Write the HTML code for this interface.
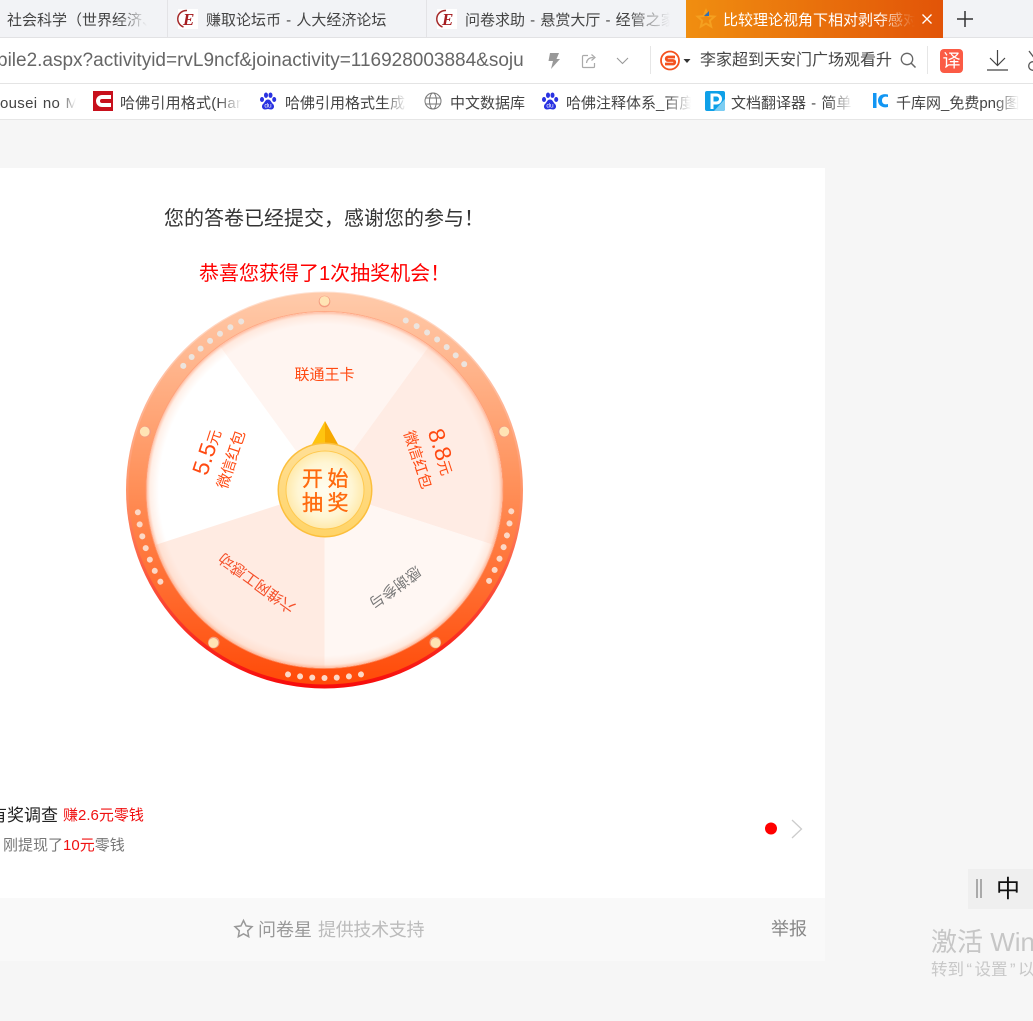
<!DOCTYPE html>
<html lang="zh"><head><meta charset="utf-8"><title>问卷星</title>
<style>
html,body{margin:0;padding:0;background:#f6f6f6}
body{position:relative;width:1033px;height:1021px;overflow:hidden;font-family:"Liberation Sans","Noto Sans CJK SC",sans-serif}
.a{position:absolute;white-space:nowrap;overflow:hidden}
.t{font-size:15px;line-height:20px;color:#444;word-spacing:1px}
.f{-webkit-mask-image:linear-gradient(90deg,#000 80%,transparent);mask-image:linear-gradient(90deg,#000 80%,transparent)}
svg{position:absolute;overflow:visible}
</style></head><body>
<!-- tab bar -->
<div class="a" style="left:0;top:0;width:1033px;height:37px;background:#f2f3f6"></div>
<div class="a" style="left:0;top:37px;width:1033px;height:1px;background:#e2e2e4"></div>
<div class="a" style="left:167px;top:0;width:1px;height:37px;background:#e3e3e6"></div>
<div class="a" style="left:426px;top:0;width:1px;height:37px;background:#e3e3e6"></div>
<div class="a t f" style="left:7px;top:11px;width:140px">社会科学（世界经济、</div>
<svg style="left:178px;top:9px" width="20" height="20" viewBox="0 0 20 20"><rect width="20" height="20" fill="#fff"/><path d="M9 1.500A8.500 8.500 0 0 0 5.500 18" fill="none" stroke="#a52a2a" stroke-width="1.500"/><text x="5" y="16" font-family="Liberation Serif" font-style="italic" font-weight="bold" font-size="17" fill="#a61e22">E</text></svg>
<div class="a t" style="left:206px;top:11px;width:190px">赚取论坛币 - 人大经济论坛</div>
<svg style="left:437px;top:9px" width="20" height="20" viewBox="0 0 20 20"><rect width="20" height="20" fill="#fff"/><path d="M9 1.500A8.500 8.500 0 0 0 5.500 18" fill="none" stroke="#a52a2a" stroke-width="1.500"/><text x="5" y="16" font-family="Liberation Serif" font-style="italic" font-weight="bold" font-size="17" fill="#a61e22">E</text></svg>
<div class="a t f" style="left:465px;top:11px;width:205px">问卷求助 - 悬赏大厅 - 经管之家</div>
<div class="a" style="left:686px;top:0;width:257px;height:38px;background:linear-gradient(90deg,#f08e10,#e25408)"></div>
<svg style="left:696px;top:9px" width="20" height="20" viewBox="0 0 20 20"><path d="M10 1.500l2.400 5.600 6 .5-4.600 4 1.400 6L10 14.500 4.800 17.600l1.400-6-4.600-4 6-.5z" fill="none" stroke="#f5a020" stroke-width="2"/><path d="M8 7l5-5v5z" fill="#2f6fb5"/></svg>
<div class="a t f" style="left:723px;top:11px;width:192px;color:#fff">比较理论视角下相对剥夺感对</div>
<svg style="left:921px;top:13px" width="12" height="12" viewBox="0 0 12 12"><path d="M1.500 1.500l9 9M10.500 1.500l-9 9" stroke="#fff" stroke-width="1.300"/></svg>
<svg style="left:957px;top:11px" width="16" height="16" viewBox="0 0 16 16"><path d="M8 0v16M0 8h16" stroke="#333" stroke-width="1.500"/></svg>
<!-- toolbar -->
<div class="a" style="left:0;top:38px;width:1033px;height:45px;background:#fff"></div>
<div class="a" style="left:0;top:83px;width:1033px;height:1px;background:#e4e4e4"></div>
<div class="a" style="left:-3px;top:50px;width:526px;font-size:19px;line-height:22px;color:#666">bile2.aspx?activityid=rvL9ncf&amp;joinactivity=116928003884&amp;soju</div>
<svg style="left:547px;top:52px" width="14" height="18" viewBox="0 0 14 18"><path d="M3 1h9L9.500 7H13L4 17l2-8H1.500z" fill="#999"/></svg>
<svg style="left:581px;top:53px" width="17" height="16" viewBox="0 0 17 16"><path d="M7 2.500H2.500a1 1 0 0 0-1 1v10a1 1 0 0 0 1 1h10a1 1 0 0 0 1-1V10" fill="none" stroke="#aaa" stroke-width="1.200"/><path d="M5.500 10c.5-4 3-5.500 7-5.500M10.500 1.500l3.500 3-3.500 3" fill="none" stroke="#aaa" stroke-width="1.200"/></svg>
<svg style="left:616px;top:57px" width="13" height="8" viewBox="0 0 13 8"><path d="M1 1l5.500 5.500L12 1" fill="none" stroke="#999" stroke-width="1.100"/></svg>
<div class="a" style="left:650px;top:46px;width:1px;height:28px;background:#e6e6e6"></div>
<svg style="left:660px;top:50px" width="30" height="22" viewBox="0 0 30 22"><circle cx="10" cy="10.500" r="9" fill="#fff" stroke="#f4511e" stroke-width="1.800"/><path d="M15 7H8a1.700 1.700 0 0 0 0 3.500h5a1.700 1.700 0 0 1 0 3.500H5" fill="none" stroke="#f4511e" stroke-width="2.800"/><path d="M23.500 9h7l-3.500 4z" fill="#333"/></svg>
<div class="a" style="left:700px;top:50px;width:192px;font-size:16px;line-height:21px;color:#444">李家超到天安门广场观看升</div>
<svg style="left:900px;top:52px" width="17" height="17" viewBox="0 0 17 17"><circle cx="7" cy="7" r="5.700" fill="none" stroke="#666" stroke-width="1.300"/><path d="M11 11l4.500 4.500" stroke="#666" stroke-width="1.500"/></svg>
<div class="a" style="left:927px;top:46px;width:1px;height:28px;background:#e6e6e6"></div>
<div class="a" style="left:940px;top:49px;width:23px;height:24px;border-radius:4px;background:#fb5b45;color:#fff;font-size:18px;line-height:24px;text-align:center">译</div>
<svg style="left:987px;top:50px" width="21" height="21" viewBox="0 0 21 21"><path d="M10.500 0v15M3 8l7.500 7.500L18 8M0 20h21" fill="none" stroke="#444" stroke-width="1.200"/></svg>
<svg style="left:1027px;top:49px" width="8" height="24" viewBox="0 0 8 24"><path d="M2 2l6 8" stroke="#555" stroke-width="1.300" fill="none"/><circle cx="6" cy="17" r="4.300" fill="none" stroke="#555" stroke-width="1.300"/></svg>
<!-- bookmarks -->
<div class="a" style="left:0;top:84px;width:1033px;height:35px;background:#fff"></div>
<div class="a" style="left:0;top:119px;width:1033px;height:1px;background:#e6e6e6"></div>
<div class="a t f" style="left:0;top:94px;width:76px;letter-spacing:.3px">ousei no M</div>
<svg style="left:93px;top:91px" width="20" height="20" viewBox="0 0 20 20"><rect width="20" height="20" fill="#c8101c"/><path d="M18 6H9a4 4 0 0 0 0 8h9" fill="none" stroke="#fff" stroke-width="4"/></svg>
<div class="a t f" style="left:120px;top:94px;width:122px;letter-spacing:.2px">哈佛引用格式(Har</div>
<svg style="left:259px;top:92px" width="18" height="18" viewBox="0 0 18 18" fill="#2932e1"><ellipse cx="3" cy="7.500" rx="2" ry="2.500"/><ellipse cx="7" cy="3.200" rx="2" ry="2.700"/><ellipse cx="11.500" cy="3.200" rx="2" ry="2.700"/><ellipse cx="15.200" cy="7.500" rx="2" ry="2.500"/><path d="M9 7.500c3 0 3 3 5 4.500 2 2 1 5.500-2 5.500-1.500 0-2-.5-3-.5s-1.500.5-3 .5c-3 0-4-3.500-2-5.500 2-1.500 2-4.500 5-4.500z"/><text x="9" y="15.500" font-size="6.500" fill="#fff" text-anchor="middle" font-family="Liberation Sans">du</text></svg>
<div class="a t f" style="left:285px;top:94px;width:122px">哈佛引用格式生成</div>
<svg style="left:424px;top:92px" width="18" height="18" viewBox="0 0 18 18" fill="none" stroke="#777" stroke-width="1"><circle cx="9" cy="9" r="8"/><ellipse cx="9" cy="9" rx="3.500" ry="8"/><path d="M1.500 6h15M1.500 12h15"/></svg>
<div class="a t" style="left:450px;top:94px;width:76px">中文数据库</div>
<svg style="left:541px;top:92px" width="18" height="18" viewBox="0 0 18 18" fill="#2932e1"><ellipse cx="3" cy="7.500" rx="2" ry="2.500"/><ellipse cx="7" cy="3.200" rx="2" ry="2.700"/><ellipse cx="11.500" cy="3.200" rx="2" ry="2.700"/><ellipse cx="15.200" cy="7.500" rx="2" ry="2.500"/><path d="M9 7.500c3 0 3 3 5 4.500 2 2 1 5.500-2 5.500-1.500 0-2-.5-3-.5s-1.500.5-3 .5c-3 0-4-3.500-2-5.500 2-1.500 2-4.500 5-4.500z"/><text x="9" y="15.500" font-size="6.500" fill="#fff" text-anchor="middle" font-family="Liberation Sans">du</text></svg>
<div class="a t f" style="left:566px;top:94px;width:125px">哈佛注释体系_百度</div>
<svg style="left:705px;top:91px" width="20" height="20" viewBox="0 0 20 20"><rect width="20" height="20" rx="2" fill="#0fa0e8"/><path d="M20 8v10a2 2 0 0 1-2 2H9z" fill="#7ccdf2"/><path d="M7 18V4h4.500a4 4 0 0 1 0 8H7" fill="none" stroke="#fff" stroke-width="3"/></svg>
<div class="a t f" style="left:731px;top:94px;width:122px">文档翻译器 - 简单</div>
<svg style="left:871px;top:93px" width="18" height="16" viewBox="0 0 18 16"><path d="M2 0h3.500v15H2z" fill="#1296f3"/><path d="M17 1.500C11 0 7 3 7 7.500s4 8 10 6.500v-3c-3 1-6 0-6-3.500s3-4.500 6-3.500z" fill="#1296f3"/></svg>
<div class="a t f" style="left:896px;top:94px;width:123px">千库网_免费png图</div>
<!-- card -->
<div class="a" style="left:0;top:168px;width:825px;height:730px;background:#fff"></div>
<div class="a" style="left:0;top:898px;width:825px;height:63px;background:#f9f9f9"></div>
<div class="a" style="left:164px;top:207px;font-size:20px;line-height:25px;color:#333">您的答卷已经提交，感谢您的参与！</div>
<div class="a" style="left:199px;top:262px;font-size:20px;line-height:25px;color:#f00">恭喜您获得了1次抽奖机会！</div>
<!-- wheel -->
<svg style="left:0;top:0" width="1033" height="1021" viewBox="0 0 1033 1021">
<defs>
<linearGradient id="o" x1="0" y1="0" x2="0" y2="1"><stop offset="0" stop-color="#ffe2d2"/><stop offset=".5" stop-color="#ff9468"/><stop offset="1" stop-color="#f70a0a"/></linearGradient>
<linearGradient id="r" x1="0" y1="0" x2="0" y2="1"><stop offset="0" stop-color="#ffcbab"/><stop offset=".5" stop-color="#ff8f58"/><stop offset="1" stop-color="#ff4a08"/></linearGradient>
<radialGradient id="v" cx="324.500" cy="490" r="178" gradientUnits="userSpaceOnUse"><stop offset=".93" stop-color="#ffc8ac" stop-opacity="0"/><stop offset=".98" stop-color="#ffc0a0" stop-opacity=".25"/><stop offset="1" stop-color="#ff9f78" stop-opacity=".7"/></radialGradient>
<radialGradient id="d"><stop offset="0" stop-color="#fffdf0"/><stop offset=".7" stop-color="#fff6d4"/><stop offset="1" stop-color="#ffeaae"/></radialGradient>
<linearGradient id="g" x1="0" y1="0" x2="0" y2="1"><stop offset="0" stop-color="#ffdf96"/><stop offset="1" stop-color="#ffd468"/></linearGradient>
<g id="ds"><circle cx="0" cy="-188" r="3"/><circle cx="0" cy="-188" r="3" transform="rotate(3.730)"/><circle cx="0" cy="-188" r="3" transform="rotate(7.460)"/><circle cx="0" cy="-188" r="3" transform="rotate(-3.730)"/><circle cx="0" cy="-188" r="3" transform="rotate(-7.460)"/><circle cx="0" cy="-188" r="3" transform="rotate(11.190)"/><circle cx="0" cy="-188" r="3" transform="rotate(-11.190)"/></g>
<g id="kn"><circle cx="0" cy="-188.500" r="5.800" fill="#f39c80"/><circle cx="0" cy="-189" r="4.900" fill="#ffe4b4"/></g>
</defs>
<g transform="translate(324.500 490)">
<circle r="198.500" fill="url(#o)"/>
<circle cy="-1.500" r="196" fill="url(#r)"/>
<circle r="179" fill="#ff9d78" opacity=".7"/>
<circle r="178" fill="#fff"/>
<path d="M0 0L-104.600-144A178 178 0 0 1 104.600-144Z" fill="#fff5f1"/>
<path d="M0 0L104.600-144A178 178 0 0 1 169.300 55Z" fill="#ffece4"/>
<path d="M0 0L169.300 55A178 178 0 0 1 0 178Z" fill="#fff7f3"/>
<path d="M0 0L0 178A178 178 0 0 1-169.300 55Z" fill="#ffebe2"/>
</g>
<circle cx="324.500" cy="490" r="178" fill="url(#v)"/>
<g transform="translate(324.500 490)">
<use href="#ds" transform="rotate(-37.500)" fill="#ece4de"/>
<use href="#ds" transform="rotate(36.800)" fill="#ece4de"/>
<use href="#ds" transform="rotate(107.700)" fill="#fcd8c6"/>
<use href="#ds" transform="rotate(180)" fill="#fcd8c6"/>
<use href="#ds" transform="rotate(252)" fill="#fcd8c6"/>
<use href="#kn"/><use href="#kn" transform="rotate(72)"/><use href="#kn" transform="rotate(144)"/><use href="#kn" transform="rotate(216)"/><use href="#kn" transform="rotate(288)"/>
</g>
<g font-family="'Liberation Sans','Noto Sans CJK SC',sans-serif" text-anchor="middle" fill="#ff4a12">
<text x="324.500" y="379.500" font-size="15">联通王卡</text>
<g transform="translate(324.500 490) rotate(72)"><text x="0" y="-116" font-size="23">8.8<tspan font-size="15">元</tspan></text><text x="0" y="-93" font-size="15">微信红包</text></g>
<g transform="translate(324.500 490) rotate(-72)"><text x="0" y="-116" font-size="23">5.5<tspan font-size="15">元</tspan></text><text x="0" y="-93" font-size="15">微信红包</text></g>
<g transform="translate(324.500 490) rotate(144)"><text x="0" y="-115" font-size="15" fill="#777">感谢参与</text></g>
<g transform="translate(324.500 490) rotate(216)"><text x="0" y="-110" font-size="15" fill="#f5502a">六维网工感动</text></g>
</g>
<path d="M325 421L311 446H325Z" fill="#ffc410"/><path d="M325 421L339 446H325Z" fill="#f6a800"/>
<circle cx="325" cy="490" r="47.500" fill="#fcbf3c"/>
<circle cx="325" cy="490" r="46" fill="url(#g)"/>
<circle cx="325" cy="490" r="39.500" fill="#ffc94f"/>
<circle cx="325" cy="490" r="38.500" fill="url(#d)"/>
<g font-family="'Liberation Sans','Noto Sans CJK SC',sans-serif" font-size="21" fill="#ff6a0d" stroke="#ff6a0d" stroke-width=".35" text-anchor="middle"><text x="312.500" y="486">开</text><text x="338" y="486">始</text><text x="312.500" y="510">抽</text><text x="338" y="510">奖</text></g>
<circle cx="771" cy="828.500" r="6" fill="#f00"/>
<path d="M792 820l9.500 9-9.500 9" fill="none" stroke="#ccc" stroke-width="1.300"/>
<path d="M243.500 920.500l2.600 5.400 5.900.8-4.300 4.100 1 5.900-5.200-2.800-5.200 2.800 1-5.900-4.300-4.100 5.900-.8z" fill="none" stroke="#999" stroke-width="1.500"/>
</svg>
<!-- bottom text -->
<div class="a" style="left:-10px;top:804px;font-size:17px;line-height:23px;color:#222">有奖调查</div>
<div class="a" style="left:63px;top:806px;font-size:15px;line-height:19px;color:#f01010">赚2.6元零钱</div>
<div class="a" style="left:3px;top:836px;font-size:15px;line-height:19px;color:#777">刚提现了<span style="color:#f01010">10元</span>零钱</div>
<div class="a" style="left:258px;top:918px;font-size:18px;line-height:24px;color:#999">问卷星</div>
<div class="a" style="left:318px;top:918px;font-size:18px;line-height:24px;color:#bbb;letter-spacing:-.3px">提供技术支持</div>
<div class="a" style="left:771px;top:917px;font-size:18px;line-height:24px;color:#888">举报</div>
<!-- ime & watermark -->
<div class="a" style="left:968px;top:869px;width:65px;height:40px;background:#efefef"></div>
<div class="a" style="left:976px;top:879px;width:1.500px;height:19px;background:#aaa"></div>
<div class="a" style="left:980px;top:879px;width:1.500px;height:19px;background:#aaa"></div>
<div class="a" style="left:996px;top:875px;font-size:24px;line-height:30px;color:#111">中</div>
<div class="a" style="left:931px;top:926px;font-size:26px;line-height:33px;color:#c6c6c6">激活 Win</div>
<div class="a" style="left:931px;top:960px;font-size:16.500px;line-height:21px;color:#c8c8c8">转到<span style="margin:0 2.500px">“</span>设置<span style="margin:0 2.500px">”</span>以</div>
</body></html>
